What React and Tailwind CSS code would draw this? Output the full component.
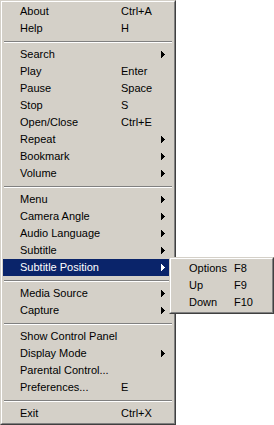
import React from "react";

const groups = [
  [
    { label: "About", key: "Ctrl+A" },
    { label: "Help", key: "H" },
  ],
  [
    { label: "Search", sub: true },
    { label: "Play", key: "Enter" },
    { label: "Pause", key: "Space" },
    { label: "Stop", key: "S" },
    { label: "Open/Close", key: "Ctrl+E" },
    { label: "Repeat", sub: true },
    { label: "Bookmark", sub: true },
    { label: "Volume", sub: true },
  ],
  [
    { label: "Menu", sub: true },
    { label: "Camera Angle", sub: true },
    { label: "Audio Language", sub: true },
    { label: "Subtitle", sub: true },
    { label: "Subtitle Position", sub: true, active: true },
  ],
  [
    { label: "Media Source", sub: true },
    { label: "Capture", sub: true },
  ],
  [
    { label: "Show Control Panel" },
    { label: "Display Mode", sub: true },
    { label: "Parental Control..." },
    { label: "Preferences...", key: "E" },
  ],
  [{ label: "Exit", key: "Ctrl+X" }],
];

const subItems = [
  { label: "Options", key: "F8" },
  { label: "Up", key: "F9" },
  { label: "Down", key: "F10" },
];

function Arrow({ white }) {
  return (
    <svg width="4" height="7" viewBox="0 0 4 7" className="shrink-0" shapeRendering="crispEdges">
      <polygon points="0,0 4,3.5 0,7" fill={white ? "#ffffff" : "#000000"} />
    </svg>
  );
}

function Separator() {
  return (
    <div className="h-[9px] pt-[4px] px-px">
      <div className="h-px bg-[#808080]" />
      <div className="h-px bg-white" />
    </div>
  );
}

function Frame({ className, children }) {
  return (
    <div
      className={`border border-t-[#d4d0c8] border-l-[#d4d0c8] border-r-[#404040] border-b-[#404040] bg-[#d4d0c8] ${className}`}
    >
      <div className="border border-t-white border-l-white border-r-[#808080] border-b-[#808080] p-px">
        {children}
      </div>
    </div>
  );
}

function Row({ item }) {
  return (
    <div
      className={`flex h-[17px] items-center pl-[17px] pr-[8px] leading-[17px] ${
        item.active ? "bg-[#0a246a] text-white" : "text-black"
      }`}
    >
      <span className="w-[101px] shrink-0 whitespace-nowrap">{item.label}</span>
      <span className="flex-1 whitespace-nowrap">{item.key}</span>
      {item.sub && <Arrow white={item.active} />}
    </div>
  );
}

export default function App() {
  return (
    <div
      className="relative h-[425px] w-[274px] overflow-hidden bg-white text-[11px]"
      style={{ fontFamily: '"Liberation Sans", Arial, sans-serif' }}
    >
      <Frame className="w-[176px]">
        {groups.map((group, gi) => (
          <div key={gi}>
            {gi > 0 && <Separator />}
            {group.map((item) => (
              <Row key={item.label} item={item} />
            ))}
          </div>
        ))}
      </Frame>

      <Frame className="absolute left-[169px] top-[257px] w-[105px]">
        {subItems.map((item) => (
          <div key={item.label} className="flex h-[17px] items-center pl-[17px] leading-[17px] text-black">
            <span className="w-[45px] shrink-0">{item.label}</span>
            <span>{item.key}</span>
          </div>
        ))}
      </Frame>
    </div>
  );
}
